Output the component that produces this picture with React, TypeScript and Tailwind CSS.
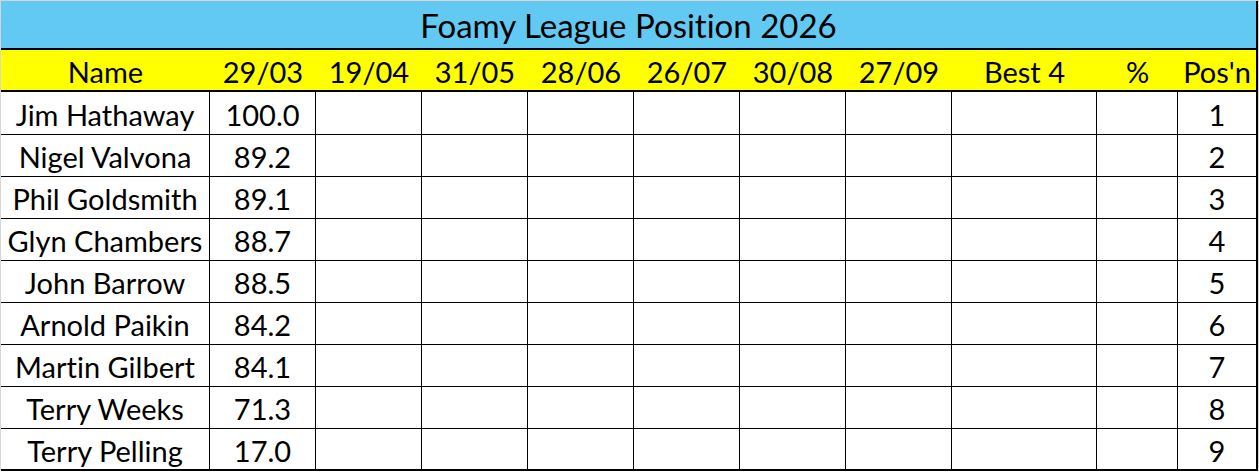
import React from 'react';

const dates = ['29/03', '19/04', '31/05', '28/06', '26/07', '30/08', '27/09'];

const players = [
  { name: 'Jim Hathaway', score: '100.0', pos: 1 },
  { name: 'Nigel Valvona', score: '89.2', pos: 2 },
  { name: 'Phil Goldsmith', score: '89.1', pos: 3 },
  { name: 'Glyn Chambers', score: '88.7', pos: 4 },
  { name: 'John Barrow', score: '88.5', pos: 5 },
  { name: 'Arnold Paikin', score: '84.2', pos: 6 },
  { name: 'Martin Gilbert', score: '84.1', pos: 7 },
  { name: 'Terry Weeks', score: '71.3', pos: 8 },
  { name: 'Terry Pelling', score: '17.0', pos: 9 },
];

// column widths include the 1px right gridline
const cols = 'grid-cols-[209px_106px_106px_106px_106px_106px_106px_106px_145px_81px_78px]';

const App: React.FC = () => {
  return (
    <div
      className="w-[1259px] h-[472px] bg-white text-black [font-variant-ligatures:none]"
      style={{ fontFamily: 'Lato, "Open Sans", sans-serif' }}
    >
      <div className="border-l border-t border-r border-[#d6d6d6]">
        <div className="border-r-2 border-black">
          {/* title band */}
          <div className="h-[49px] bg-[#62c9f2] border-b-2 border-black flex items-center justify-center pt-[1px] text-[33px] leading-none">
            Foamy League Position 2026
          </div>

          {/* header row */}
          <div className={`grid ${cols} h-[42px] bg-[#ffff00] border-b-2 border-black text-[29px] leading-none`}>
            <div className="flex items-center justify-center pt-[3px]">Name</div>
            {dates.map(d => (
              <div key={d} className="flex items-center justify-center pt-[3px]">{d}</div>
            ))}
            <div className="flex items-center justify-center pt-[3px]">Best 4</div>
            <div className="flex items-center justify-center pt-[3px]">%</div>
            <div className="flex items-center justify-center pt-[3px]">Pos'n</div>
          </div>

          {/* data rows */}
          {players.map((p, i) => {
            const last = i === players.length - 1;
            const rowH = i === 0 ? 'h-[43px]' : 'h-[42px]';
            return (
              <div
                key={p.name}
                className={`grid ${cols} ${rowH} ${last ? 'border-b-2' : 'border-b'} border-black text-[29px] leading-none`}
              >
                <div className="border-r border-black flex items-center justify-center pt-[2px] whitespace-nowrap">{p.name}</div>
                <div className="border-r border-black flex items-center justify-center pt-[2px]">{p.score}</div>
                {dates.slice(1).map(d => (
                  <div key={d} className="border-r border-black" />
                ))}
                <div className="border-r border-black" />
                <div className="border-r border-black" />
                <div className="flex items-center justify-center pt-[2px]">{p.pos}</div>
              </div>
            );
          })}
        </div>
      </div>
    </div>
  );
};

export default App;
